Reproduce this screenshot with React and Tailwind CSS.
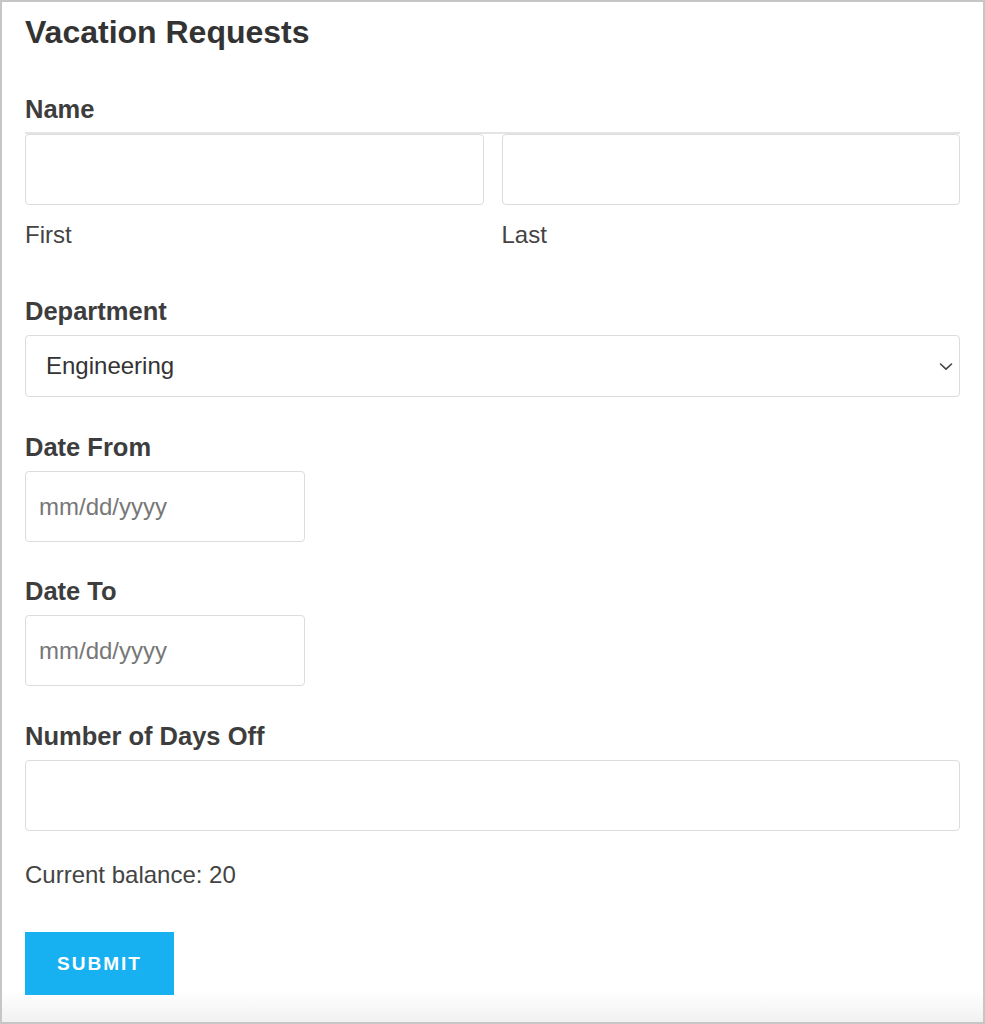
import React from "react";

const labelCls =
  "block text-[25.5px] leading-[30px] font-bold text-[#3d3d3d]";
const inputCls =
  "block w-full h-[71px] border border-[#dcdcdc] rounded-[4px] bg-white px-[13px] text-[24px] text-[#444] placeholder:text-[#777] outline-none";

const Field = ({ label, className = "", children }) => (
  <div className={className}>
    <label className={labelCls}>{label}</label>
    <div className="mt-[9px]">{children}</div>
  </div>
);

export default function App() {
  return (
    <div className="w-[985px] h-[1024px] border-2 border-[#c6c6c6] bg-linear-to-b from-white from-[97%] to-[#f1f1f1] px-[23px] pt-[10px] font-['Liberation_Sans',Arial,sans-serif] text-[#444]">
      <h1 className="text-[32px] leading-[40px] font-bold text-[#333]">
        Vacation Requests
      </h1>

      <div className="mt-[42px]">
        <label className={labelCls}>Name</label>
        <div className="mt-[8px] border-t-2 border-[#e4e4e4] grid grid-cols-2 gap-[18px]">
          <div>
            <input type="text" readOnly className={inputCls} />
            <div className="mt-[15px] text-[24px] leading-[30px]">First</div>
          </div>
          <div>
            <input type="text" readOnly className={inputCls} />
            <div className="mt-[15px] text-[24px] leading-[30px]">Last</div>
          </div>
        </div>
      </div>

      <Field label="Department" className="mt-[46px]">
        <div className="relative h-[62px] border border-[#dcdcdc] rounded-[4px] bg-white flex items-center pl-[20px] text-[24px] text-[#333]">
          Engineering
          <svg
            className="absolute right-[6px] top-1/2 -translate-y-1/2"
            width="14"
            height="10"
            viewBox="0 0 14 10"
            fill="none"
          >
            <path
              d="M1.5 3l5.5 5.2L12.5 3"
              stroke="#444"
              strokeWidth="1.6"
              strokeLinecap="round"
              strokeLinejoin="round"
            />
          </svg>
        </div>
      </Field>

      <Field label="Date From" className="mt-[35px]">
        <input
          type="text"
          readOnly
          placeholder="mm/dd/yyyy"
          className={inputCls + " !w-[280px]"}
        />
      </Field>

      <Field label="Date To" className="mt-[34px]">
        <input
          type="text"
          readOnly
          placeholder="mm/dd/yyyy"
          className={inputCls + " !w-[280px]"}
        />
      </Field>

      <Field label="Number of Days Off" className="mt-[35px]">
        <input type="text" readOnly className={inputCls} />
      </Field>

      <p className="mt-[29px] text-[24px] leading-[30px] text-[#444]">
        Current balance: 20
      </p>

      <button className="mt-[42px] w-[149px] h-[63px] bg-[#17b0f0] text-white text-[19px] font-bold tracking-[2px] flex items-center justify-center pt-[2px]">
        SUBMIT
      </button>
    </div>
  );
}
